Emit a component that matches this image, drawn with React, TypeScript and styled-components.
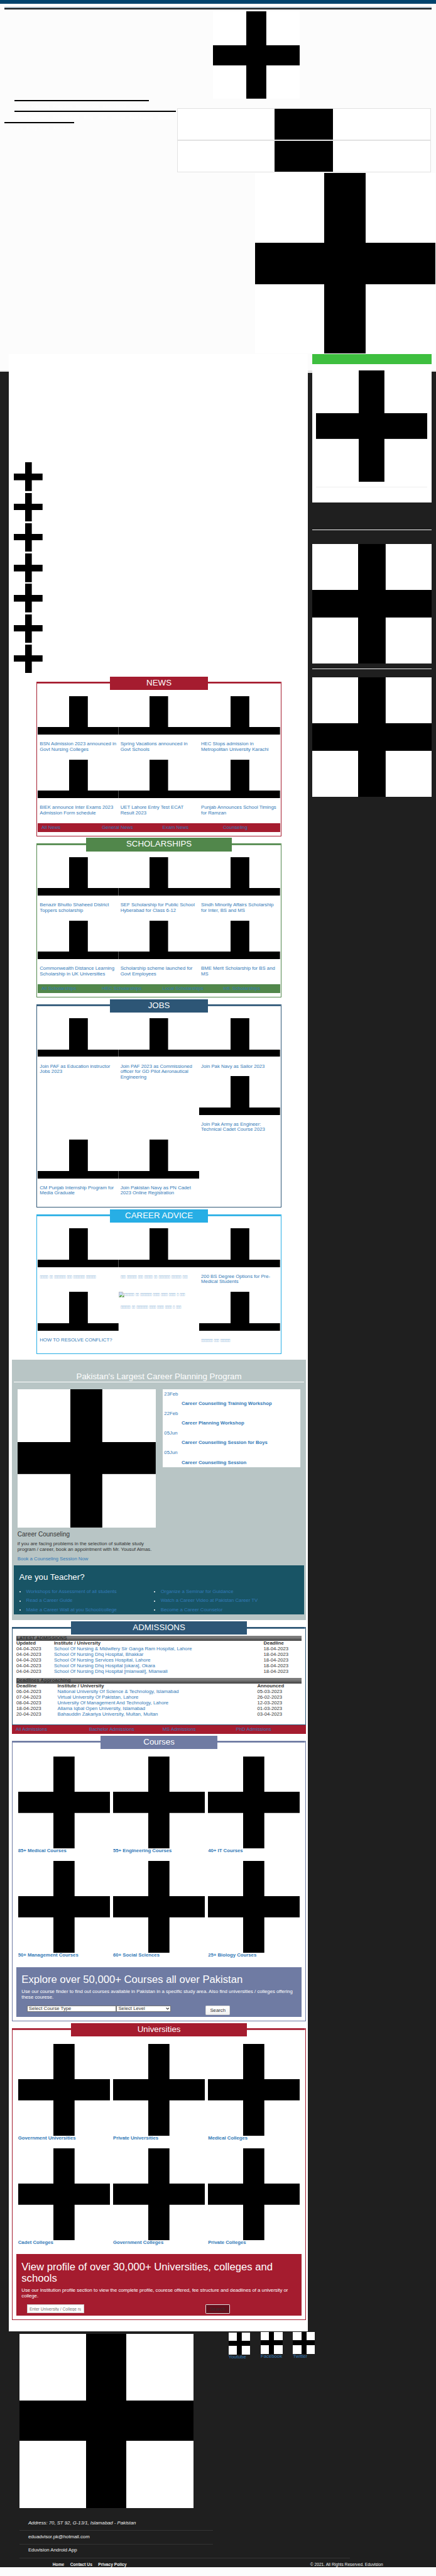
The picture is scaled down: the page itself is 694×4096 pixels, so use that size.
import React from "react";
import styled, { createGlobalStyle } from "styled-components";

const Global = createGlobalStyle`
  * { box-sizing: border-box; }
  body { margin: 0; background: #fcfcfc; overflow-x: hidden; }
  h2, h3, p, ul { margin: 0; padding: 0; font-weight: normal; }
`;

const RED = "#a51c2f";
const NAVY = "#2d5676";
const SLATE = "#6f7ba3";
const LINK = "#337ab7";

const Page = styled.div`
  zoom: 0.555;
  width: 1250.5px;
  height: 7380px;
  font: 14px/16px "Liberation Sans", Arial, sans-serif;
  color: #333;
  background: linear-gradient(#fcfcfc 1061px, #e5e5e5 1061px 1064px, #1f1f1f 1064px 7355px, #fcfcfc 7355px);
`;

const TopBar = styled.div`
  height: 11px;
  background: #00436d;
`;

const HeaderRule = styled.div`
  margin: 8px 12px 0 13px;
  height: 8px;
  border-top: 3.7px solid #a0b1bd;
  background: #0f1416;
`;

const Cross = styled.div<{ $size?: number }>`
  width: ${(p) => (p.$size ? `${p.$size}px` : "100%")};
  aspect-ratio: 1;
  flex: none;
  background:
    linear-gradient(#000, #000) center / 23.1% 100% no-repeat,
    linear-gradient(#000, #000) center / 100% 23.1% no-repeat,
    #fff;
`;

const LogoRow = styled.div`
  padding: 6px 0 0 610px;
`;

const NavArea = styled.div`
  display: flex;
  height: 213px;
`;

const NavColumn = styled.nav`
  width: 508px;
  padding: 4px 0 0 13px;
`;

const NavGroup = styled.div`
  display: flex;
  height: 62px;
  flex-direction: column;
`;

const NavRow = styled.div<{ $width: number; $height: number; $left?: number }>`
  display: flex;
  margin-left: ${(p) => p.$left ?? 0}px;
  width: ${(p) => p.$width}px;
  height: ${(p) => p.$height}px;
  padding: 8px 7px 0;
  justify-content: space-between;
  border-top: 3.8px solid #000;
  color: #fff;
  font-size: 12px;
  font-weight: bold;
  white-space: nowrap;
`;

const BannerColumn = styled.div`
  padding-top: 27px;
  display: flex;
  flex-direction: column;
`;

const Banner = styled.div`
  width: 728px;
  height: 92px;
  border: 1.8px solid #e2e2e2;
  border-top-width: 1px;
  background: linear-gradient(#000, #000) center / 168px 100% no-repeat #fff;
`;

const Hero = styled.div`
  padding-left: 731px;
  height: 519px;
`;

const Columns = styled.div`
  display: flex;
  padding-left: 25px;
  height: 5664px;
`;

const Main = styled.main`
  width: 857px;
  background: #fff;
  padding: 310px 5px 0 10px;
`;

const Divide = styled.div`
  width: 13px;
  margin-top: 49px;
  height: 5px;
  background: #e5e5e5;
`;

const Sidebar = styled.aside`
  width: 343px;
`;

const GreenBar = styled.div`
  height: 29px;
  background: #3ebf3f;
`;

const SideCard = styled.div`
  height: 395px;
  padding: 17px 12px 0;
  background: #fff;
`;

const Rule = styled.div<{ $top: number; $bottom?: number }>`
  height: 2px;
  background: #eee;
  margin: ${(p) => p.$top}px 0 ${(p) => p.$bottom ?? 0}px;
`;

const IconStack = styled.div`
  display: flex;
  flex-direction: column;
  gap: 5px;
  padding-left: 5px;
  height: 609px;
`;

const Panel = styled.section<{ $color: string; $height: number; $wide?: boolean }>`
  width: ${(p) => (p.$wide ? 842 : 702)}px;
  height: ${(p) => p.$height}px;
  margin: 20px 0 0 ${(p) => (p.$wide ? 0 : 70)}px;
  border: 2px solid ${(p) => p.$color};
  border-top: 0;
  padding: 5px ${(p) => (p.$wide ? 10 : 2.2)}px 0;
  background: linear-gradient(${(p) => p.$color}, ${(p) => p.$color}) top / 100% 5px no-repeat;
`;

const PanelTitle = styled.h2<{ $color: string; $width: number }>`
  width: ${(p) => p.$width}px;
  height: 38px;
  margin: -20px auto 17px;
  background: ${(p) => p.$color};
  color: #fff;
  font-size: 24px;
  line-height: 37px;
  text-align: center;
`;

const Stories = styled.div`
  display: flow-root;
`;

const Story = styled.a<{ $tall?: boolean; $newRow?: boolean }>`
  float: left;
  clear: ${(p) => (p.$newRow ? "left" : "none")};
  display: block;
  width: 33.333%;
  min-height: ${(p) => (p.$tall ? 182 : 0)}px;
  color: ${LINK};
`;

const Thumb = styled.div`
  height: 110px;
  overflow: hidden;
`;

const Caption = styled.div`
  padding: 20px 5px;
`;

const Glyphs = styled.span`
  font: 11px/16px "DejaVu Sans", sans-serif;
  letter-spacing: -1.4px;
  color: #8db5d9;
  white-space: pre;
`;

const BrokenImage = styled.div`
  display: flex;
  height: 16px;
`;

const LinkBar = styled.div<{ $color: string }>`
  display: grid;
  grid-template-columns: repeat(4, 1fr);
  height: 26px;
  line-height: 26px;
  background: ${(p) => p.$color};
  color: ${LINK};
  a { padding-left: 10px; }
`;

const Planning = styled.section`
  margin-top: 15px;
  width: 842px;
  height: 746px;
  padding: 33px 5px 0;
  background: #b8c5c5;
`;

const PlanningTitle = styled.h2`
  height: 32px;
  border-bottom: 2px solid #fff;
  color: #fff;
  font-size: 24px;
  line-height: 32px;
  text-align: center;
`;

const PlanningColumns = styled.div`
  display: flex;
  gap: 20px;
  height: 525px;
  padding: 20px 10px 0;
`;

const Counseling = styled.div`
  width: 396px;
  h3 { font-size: 18px; line-height: 20px; margin: 10px 0 11px; }
  p { margin-bottom: 10px; white-space: nowrap; }
  a { color: ${LINK}; }
`;

const Events = styled.div`
  width: 396px;
  height: 224px;
  padding: 0 5px;
  background: #fff;
  color: ${LINK};
  line-height: 28px;
  b { display: block; padding-left: 50px; }
`;

const Teacher = styled.div`
  height: 141px;
  padding: 20px 15px 0;
  background: #185465;
  h3 { color: #fff; font-size: 24px; line-height: 28px; margin-bottom: 15px; }
`;

const TeacherList = styled.ul`
  display: grid;
  grid-template-columns: 386px 1fr;
  list-style: none;
  color: ${LINK};
  line-height: 26px;
  li { display: flex; align-items: center; }
  li::before { content: ""; width: 4px; height: 4px; border-radius: 50%; background: #fff; margin-right: 16px; }
`;

const TableTitle = styled.div`
  height: 16px;
  background: linear-gradient(#7d7d7d 35%, #404040);
  font-weight: bold;
`;

const Row = styled.div<{ $cols: string; $bold?: boolean }>`
  display: grid;
  grid-template-columns: ${(p) => p.$cols};
  font-weight: ${(p) => (p.$bold ? "bold" : "normal")};
  a { color: ${LINK}; }
`;

const Tiles = styled.div`
  display: grid;
  grid-template-columns: repeat(3, 263px);
  column-gap: 9.5px;
  row-gap: 20px;
  padding: 5px 0 25px 5px;
`;

const Tile = styled.a`
  color: ${LINK};
  font-weight: bold;
`;

const Finder = styled.div<{ $color: string }>`
  padding: 20px 15px 0;
  background: ${(p) => p.$color};
  color: #fff;
  h3 { font-size: 30px; line-height: 33px; margin-bottom: 11px; }
`;

const FinderForm = styled.div`
  display: flex;
  height: 46px;
  padding: 14px 0 0 15px;
`;

const Select = styled.div<{ $width: number }>`
  display: flex;
  justify-content: space-between;
  align-items: center;
  width: ${(p) => p.$width}px;
  height: 19px;
  padding: 0 3px 0 4px;
  background: #fff;
  border: 1.8px solid #767676;
  border-left-width: 1px;
  border-right-width: 1px;
  color: #333;
`;

const Input = styled.input`
  width: 164px;
  height: 26px;
  padding: 0 6px;
  border: 1px solid #ccc;
  font: 12px "Liberation Sans", Arial, sans-serif;
  &::placeholder { color: #757575; }
`;

const Button = styled.button<{ $dark?: boolean }>`
  width: 71px;
  height: 27px;
  margin-left: auto;
  margin-right: 190px;
  padding: 0;
  border: 1.8px solid ${(p) => (p.$dark ? "#ddd" : "#d5d5d5")};
  border-radius: 2px;
  background: ${(p) => (p.$dark ? "#630f1c" : "linear-gradient(#fff, #f1f1f1)")};
  color: #333;
  font: 14px "Liberation Sans", Arial, sans-serif;
`;

const Footer = styled.footer`
  height: 676px;
  padding-left: 55px;
  color: #eee;
`;

const FooterTop = styled.div`
  display: flex;
  height: 533px;
`;

const FooterLogo = styled.div`
  width: 600px;
  padding-top: 7px;
`;

const Social = styled.a<{ $top: number }>`
  width: 92.6px;
  padding-top: ${(p) => p.$top}px;
  color: ${LINK};
`;

const ContactLine = styled.div<{ $width: number; $italic?: boolean }>`
  width: ${(p) => p.$width}px;
  height: 39px;
  padding: 10px 0 0 26px;
  border-bottom: 1.8px solid #343434;
  font-style: ${(p) => (p.$italic ? "italic" : "normal")};
`;

const Legal = styled.div`
  display: flex;
  gap: 17px;
  padding: 12px 152px 0 96px;
  font-size: 12px;
  line-height: 14px;
  span { margin-left: auto; }
`;

const box = (...words: number[]) => words.map((n) => "▯".repeat(n)).join("  ");

type StoryItem = { text?: string; glyphs?: string; broken?: boolean; tall?: boolean; newRow?: boolean };

function StoryList({ items }: { items: StoryItem[] }) {
  return (
    <Stories>
      {items.map((s, i) => (
        <Story key={i} $tall={s.tall} $newRow={s.newRow}>
          {s.broken ? (
            <BrokenImage>
              <svg width="16" height="16" viewBox="0 0 16 16">
                <path d="M.5.5h10l5 5v10H.5z" fill="#c9daf5" stroke="#8f8f8f" />
                <path d="M10.5.5v5h5" fill="#fff" stroke="#8f8f8f" />
                <path d="M1 15l5-6 3 2 4-3 2 7z" fill="#52a836" />
                <path d="M7 15.6l8.5-9" stroke="#fff" strokeWidth="2" />
              </svg>
              <Glyphs>{s.glyphs}</Glyphs>
            </BrokenImage>
          ) : (
            <Thumb><Cross /></Thumb>
          )}
          <Caption>{s.glyphs ? <Glyphs>{s.glyphs}</Glyphs> : s.text}</Caption>
        </Story>
      ))}
    </Stories>
  );
}

const news: StoryItem[] = [
  { text: "BSN Admission 2023 announced in Govt Nursing Colleges" },
  { text: "Spring Vacations announced in Govt Schools" },
  { text: "HEC Stops admission in Metropolitan University Karachi" },
  { text: "BIEK announce Inter Exams 2023 Admission Form schedule", newRow: true },
  { text: "UET Lahore Entry Test ECAT Result 2023" },
  { text: "Punjab Announces School Timings for Ramzan" },
];
const scholarships: StoryItem[] = [
  { text: "Benazir Bhutto Shaheed District Toppers scholarship" },
  { text: "SEF Scholarship for Public School Hyberabad for Class 6-12" },
  { text: "Sindh Minority Affairs Scholarship for Inter, BS and MS" },
  { text: "Commonwealth Distance Learning Scholarship in UK Universities", newRow: true },
  { text: "Scholarship scheme launched for Govt Employees" },
  { text: "BME Merit Scholarship for BS and MS" },
];
const jobs: StoryItem[] = [
  { text: "Join PAF as Education instructor Jobs 2023" },
  { text: "Join PAF 2023 as Commissioned officer for GD Pilot Aeronautical Engineering" },
  { text: "Join Pak Navy as Sailor 2023" },
  { text: "Join Pak Army as Engineer: Technical Cadet Course 2023" },
  { text: "CM Punjab Internship Program for Media Graduate" },
  { text: "Join Pakistan Navy as PN Cadet 2023 Online Registration" },
];
const advice: StoryItem[] = [
  { glyphs: box(5, 2, 7, 3, 7, 6), tall: true },
  { glyphs: box(3, 6, 3, 5, 2, 7, 6, 3), tall: true },
  { text: "200 BS Degree Options for Pre-Medical Students" },
  { text: "HOW TO RESOLVE CONFLICT?", newRow: true, tall: true },
  { glyphs: box(6, 2, 7, 4, 4, 4, 1, 3), broken: true },
  { glyphs: box(7, 3, 6) },
];

const events = [
  ["23Feb", "Career Counselling Training Workshop"],
  ["22Feb", "Career Planning Workshop"],
  ["05Jun", "Career Counselling Session for Boys"],
  ["05Jun", "Career Counselling Session"],
];

const teacherLinks = [
  "Workshops for Assessment of all students", "Organize a Seminar for Guidance",
  "Read a Career Guide", "Watch a Career Video at Pakistan Career TV",
  "Make a Career Wall at you School/college", "Become a Career Counselor",
];

const latest = [
  ["04-04-2023", "School Of Nursing & Midwifery Sir Ganga Ram Hospital, Lahore", "18-04-2023"],
  ["04-04-2023", "School Of Nursing Dhq Hospital, Bhakkar", "18-04-2023"],
  ["04-04-2023", "School Of Nursing Services Hospital, Lahore", "18-04-2023"],
  ["04-04-2023", "School Of Nursing Dhq Hospital [okara], Okara", "18-04-2023"],
  ["04-04-2023", "School Of Nursing Dhq Hospital [mianwali], Mianwali", "18-04-2023"],
];
const approaching = [
  ["06-04-2023", "National University Of Science & Technology, Islamabad", "05-03-2023"],
  ["07-04-2023", "Virtual University Of Pakistan, Lahore", "26-02-2023"],
  ["08-04-2023", "University Of Management And Technology, Lahore", "12-03-2023"],
  ["18-04-2023", "Allama Iqbal Open University, Islamabad", "01-03-2023"],
  ["20-04-2023", "Bahauddin Zakariya University, Multan, Multan", "03-04-2023"],
];

const TableBlock = styled.div`
  height: 122px;
`;

function Table({ title, head, rows, cols }: { title: string; head: string[]; rows: string[][]; cols: string }) {
  return (
    <TableBlock>
      <TableTitle>{title}</TableTitle>
      <Row $cols={cols} $bold>{head.map((h) => <span key={h}>{h}</span>)}</Row>
      {rows.map((r) => (
        <Row $cols={cols} key={r[1]}><span>{r[0]}</span><a>{r[1]}</a><span>{r[2]}</span></Row>
      ))}
    </TableBlock>
  );
}

const AdmissionsTitle = styled(PanelTitle)`
  margin-bottom: 2px;
`;

function TileGrid({ labels }: { labels: string[] }) {
  return (
    <Tiles>
      {labels.map((l) => <Tile key={l}><Cross />{l}</Tile>)}
    </Tiles>
  );
}

export default function App() {
  return (
    <>
      <Global />
      <Page>
        <TopBar />
        <HeaderRule />
        <LogoRow><Cross $size={250} /></LogoRow>
        <NavArea>
          <NavColumn>
            <NavGroup>
              <NavRow $left={29} $width={385} $height={30.5}>
                <span>Career Planning</span><span>Programs</span><span>Institutions</span><span>Admissions</span><span>Ranking</span>
              </NavRow>
              <NavRow $left={29} $width={463} $height={31}>
                <span>Merit Calculator</span><span>Scholarships</span><span>Blog</span><span>Jobs</span><span>Videos</span><span>Past Papers</span><span>Quizzes</span>
              </NavRow>
            </NavGroup>
            <NavRow $width={199} $height={31}>
              <span>Careers</span><span>Entry Tests</span><span>About Us</span>
            </NavRow>
          </NavColumn>
          <BannerColumn><Banner /><Banner /></BannerColumn>
        </NavArea>
        <Hero><Cross $size={517} /></Hero>

        <Columns>
          <Main>
            <IconStack>{Array.from({ length: 7 }, (_, i) => <Cross key={i} $size={82} />)}</IconStack>

            <Panel $color={RED} $height={442}>
              <PanelTitle $color={RED} $width={280}>NEWS</PanelTitle>
              <StoryList items={news} />
              <LinkBar $color={RED}><a>All News</a><a>General News</a><a>Exam News</a><a>Counseling</a></LinkBar>
            </Panel>
            <Panel $color="#51874b" $height={442}>
              <PanelTitle $color="#51874b" $width={418}>SCHOLARSHIPS</PanelTitle>
              <StoryList items={scholarships} />
              <LinkBar $color="#51874b"><a>All Scholarships</a><a>HEC Scholarships</a><a>Local Scholarships</a><a>Intl. Scholarships</a></LinkBar>
            </Panel>
            <Panel $color={NAVY} $height={582}>
              <PanelTitle $color={NAVY} $width={280}>JOBS</PanelTitle>
              <StoryList items={jobs} />
            </Panel>
            <Panel $color="#27aee5" $height={400}>
              <PanelTitle $color="#27aee5" $width={280}>CAREER ADVICE</PanelTitle>
              <StoryList items={advice} />
            </Panel>

            <Planning>
              <PlanningTitle>Pakistan's Largest Career Planning Program</PlanningTitle>
              <PlanningColumns>
                <Counseling>
                  <Cross />
                  <h3>Career Counseling</h3>
                  <p>if you are facing problems in the selection of suitable study<br />program / career, book an appointment with Mr. Yousuf Almas.</p>
                  <a>Book a Counseling Session Now</a>
                </Counseling>
                <Events>
                  {events.map(([d, t]) => <div key={t}>{d}<b>{t}</b></div>)}
                </Events>
              </PlanningColumns>
              <Teacher>
                <h3>Are you Teacher?</h3>
                <TeacherList>{teacherLinks.map((t) => <li key={t}>{t}</li>)}</TeacherList>
              </Teacher>
            </Planning>

            <Panel $color={NAVY} $height={281} $wide>
              <AdmissionsTitle $color={NAVY} $width={504}>ADMISSIONS</AdmissionsTitle>
              <Table title="LATEST ADMISSIONS" head={["Updated", "Institute / University", "Deadline"]} rows={latest} cols="108px 601px 1fr" />
              <Table title="Deadlines Approaching" head={["Deadline", "Institute / University", "Announced"]} rows={approaching} cols="118px 573px 1fr" />
            </Panel>
            <LinkBar $color={RED}><a>All Admissions</a><a>Bachelor Admissions</a><a>MS Admissions</a><a>PhD Admissions</a></LinkBar>

            <Panel $color={SLATE} $height={803} $wide>
              <PanelTitle $color={SLATE} $width={336}>Courses</PanelTitle>
              <TileGrid labels={["85+ Medical Courses", "55+ Engineering Courses", "40+ IT Courses", "50+ Management Courses", "60+ Social Sciences", "25+ Biology Courses"]} />
              <Finder $color={SLATE}>
                <h3>Explore over 50,000+ Courses all over Pakistan</h3>
                <p>Use our course finder to find out courses available in Pakistan in a specific study area. Also find universities / colleges offering these courese.</p>
                <FinderForm>
                  <Select $width={257}>Select Course Type</Select>
                  <Select $width={157}>
                    Select Level
                    <svg width="10" height="7" viewBox="0 0 10 7"><path d="M1 1l4 4 4-4" fill="none" stroke="#222" strokeWidth="2" /></svg>
                  </Select>
                  <Button>Search</Button>
                </FinderForm>
              </Finder>
            </Panel>
            <Panel $color={RED} $height={837} $wide>
              <PanelTitle $color={RED} $width={504}>Universities</PanelTitle>
              <TileGrid labels={["Government Universities", "Private Universities", "Medical Colleges", "Cadet Colleges", "Government Colleges", "Private Colleges"]} />
              <Finder $color={RED}>
                <h3>View profile of over 30,000+ Universities, colleges and schools</h3>
                <p>Use our Institution profile section to view the complete profile, courese offered, fee structure and deadlines of a university or college.</p>
                <FinderForm>
                  <Input placeholder="Enter University / College name" />
                  <Button $dark>Search</Button>
                </FinderForm>
              </Finder>
            </Panel>
          </Main>
          <Divide />
          <Sidebar>
            <GreenBar />
            <SideCard><Cross /><Rule $top={14} /></SideCard>
            <Rule $top={78} $bottom={39} />
            <Cross />
            <Rule $top={14} $bottom={23} />
            <Cross />
          </Sidebar>
        </Columns>

        <Footer>
          <FooterTop>
            <FooterLogo><Cross $size={500} /></FooterLogo>
            <Social $top={4}><Cross $size={63} />Youtube</Social>
            <Social $top={2}><Cross $size={63} />Facebook</Social>
            <Social $top={2}><Cross $size={63} />Twitter</Social>
          </FooterTop>
          <ContactLine $width={555} $italic>Address: 70, ST 92, G-13/1, Islamabad - Pakistan</ContactLine>
          <ContactLine $width={555}>eduadvisor.pk@hotmail.com</ContactLine>
          <ContactLine $width={948}>Eduvision Android App</ContactLine>
          <Legal><b>Home</b><b>Contact Us</b><b>Privacy Policy</b><span>© 2021. All Rights Reserved. Eduvision</span></Legal>
        </Footer>
      </Page>
    </>
  );
}
